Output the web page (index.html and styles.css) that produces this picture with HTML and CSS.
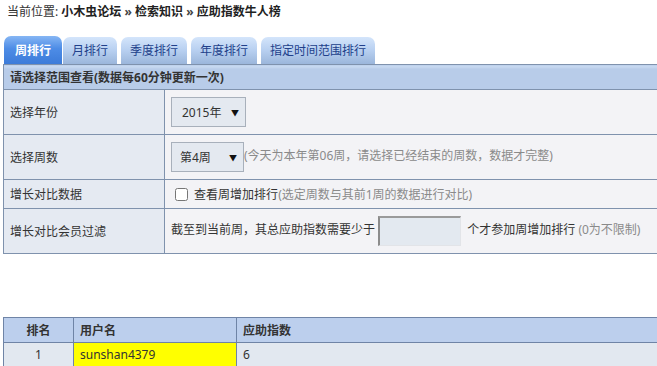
FILE: index.html
```html
<!DOCTYPE html>
<html lang="zh-CN">
<head>
<meta charset="utf-8">
<title>应助指数牛人榜</title>
<link rel="stylesheet" href="styles.css">
</head>
<body>
<div class="crumb">当前位置: <b>小木虫论坛</b> <b class="sep">»</b> <b>检索知识</b> <b class="sep">»</b> <b>应助指数牛人榜</b></div>

<div class="tabs">
  <a class="tab active">周排行</a>
  <a class="tab">月排行</a>
  <a class="tab">季度排行</a>
  <a class="tab">年度排行</a>
  <a class="tab">指定时间范围排行</a>
</div>

<table class="form">
  <colgroup><col class="c-label"><col></colgroup>
  <tr class="head"><th colspan="2">请选择范围查看(数据每60分钟更新一次)</th></tr>
  <tr class="tall">
    <td class="label">选择年份</td>
    <td class="val"><span class="sel"><select class="w75"><option>2015年</option></select></span></td>
  </tr>
  <tr class="tall">
    <td class="label">选择周数</td>
    <td class="val"><span class="sel"><select class="w73"><option>第4周</option></select></span><span class="hint">(今天为本年第06周，请选择已经结束的周数，数据才完整)</span></td>
  </tr>
  <tr class="short">
    <td class="label">增长对比数据</td>
    <td class="val"><input type="checkbox" class="chk"> 查看周增加排行<span class="hint">(选定周数与其前1周的数据进行对比)</span></td>
  </tr>
  <tr class="tall">
    <td class="label">增长对比会员过滤</td>
    <td class="val">截至到当前周，其总应助指数需要少于 <input type="text" class="num"> 个才参加周增加排行 <span class="hint">(0为不限制)</span></td>
  </tr>
</table>

<table class="rank">
  <colgroup><col class="c-rank"><col class="c-user"><col></colgroup>
  <tr class="head"><th class="center">排名</th><th>用户名</th><th>应助指数</th></tr>
  <tr><td class="center">1</td><td class="hl">sunshan4379</td><td>6</td></tr>
</table>
</body>
</html>
```

FILE: styles.css
```css
html, body {
  margin: 0;
  padding: 0;
  overflow: hidden;
  background: #fff;
}
body {
  font-family: "Noto Sans", "Noto Sans CJK SC", sans-serif;
  font-size: 12px;
  color: #333;
}
.crumb {
  padding: 4px 7px 0;
  line-height: 16px;
  height: 16px;
}
.crumb b { color: #222; }
.crumb .sep { font-weight: bold; color: #444; }

.tabs {
  display: flex;
  align-items: flex-end;
  padding-left: 4px;
  margin-top: 16px;
  height: 28px;
}
.tab {
  display: block;
  height: 27px;
  line-height: 28px;
  padding: 0 9px;
  margin-right: 4px;
  border-radius: 7px 7px 0 0;
  background: linear-gradient(#d4e5fb, #b7cff0 50%, #9bb6db);
  color: #21408a;
  white-space: nowrap;
}
.tab.active {
  height: 28px;
  line-height: 29px;
  padding: 0 11px;
  margin-right: 1px;
  background: linear-gradient(#86b6f4, #4d8ce6 45%, #3c7bd9);
  color: #fff;
  font-weight: bold;
}

table {
  border-collapse: collapse;
  margin-left: 3px;
  width: calc(100% - 3px);
  table-layout: fixed;
}
td, th {
  border: 1px solid #7f92ad;
  padding: 0 6px;
  text-align: left;
  white-space: nowrap;
}
td:last-child, th:last-child { border-right: none; }

.form .c-label { width: 161px; }
.form .head th {
  height: 24px;
  background: linear-gradient(#c6d8f0 0, #c6d8f0 2px, #b8cce9 3px);
  font-weight: bold;
  color: #333;
}
.form .tall td { height: 44px; }
.form .short td { height: 28px; }
.form .label { background: #e5eaf2; }
.form .val { background: #f3f3f6; }

.sel {
  position: relative;
  display: inline-block;
  vertical-align: middle;
}
.sel select {
  -webkit-appearance: none;
  appearance: none;
  height: 30px;
  padding: 0 0 0 10px;
  border: 1px solid #a8b0bb;
  border-radius: 0;
  background: #e4e9f0;
  font-family: inherit;
  font-size: 12px;
  color: #333;
  display: block;
}
.sel .w75 { width: 75px; }
.sel .w73 { width: 73px; padding-left: 8px; }
.sel::after {
  content: "▼";
  position: absolute;
  right: 7px;
  top: 50%;
  transform: translateY(-50%);
  font-size: 8px;
  color: #111;
  pointer-events: none;
}
.hint { color: #8a8a8a; }
.chk {
  margin: 0 3px 0 4px;
  width: 13px;
  height: 13px;
  vertical-align: -2px;
}
.num {
  box-sizing: border-box;
  width: 83px;
  height: 30px;
  vertical-align: middle;
  margin: 0 3px 0 0;
  border-style: solid;
  border-width: 2px 1px 1px 2px;
  border-color: #9a9a9a #e2e4e8 #e2e4e8 #8c8c8c;
  background: #e3e9f0;
}

.rank { margin-top: 63px; }
.rank td, .rank th { border-color: #6f84a6; }
.rank .c-rank { width: 70px; }
.rank .c-user { width: 163px; }
.rank .head th {
  height: 24px;
  background: #bccfed;
  font-weight: bold;
  color: #333;
}
.rank td {
  height: 23px;
  background: #e2e8f0;
}
.rank .center { text-align: center; }
.rank td.hl { background: #ffff00; }
```
